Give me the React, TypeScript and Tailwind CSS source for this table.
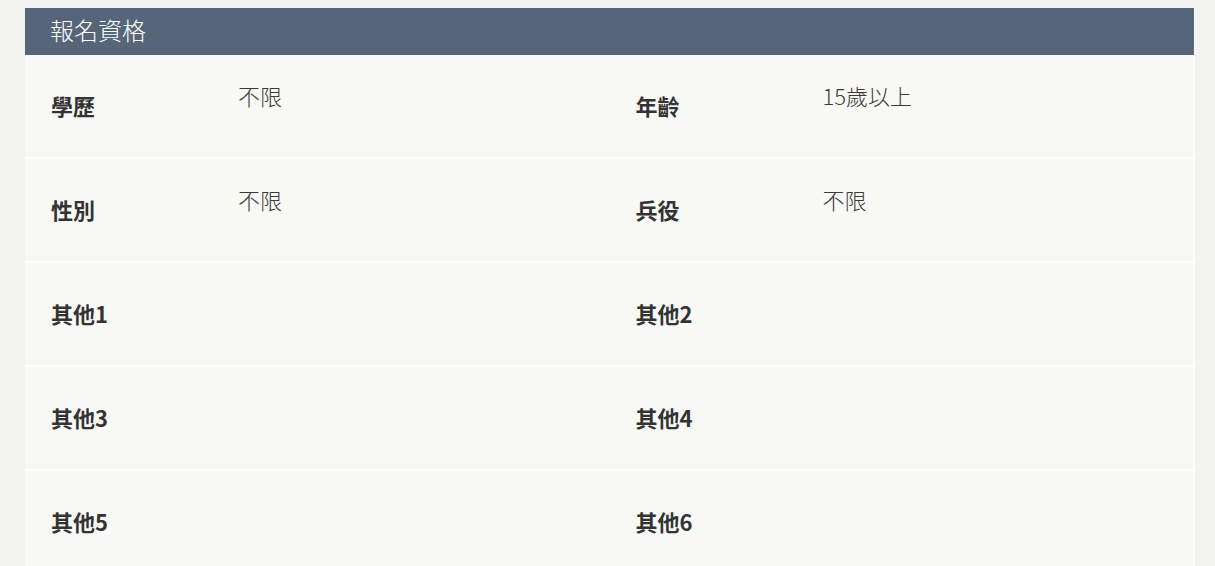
import React from 'react';

type Item = { label: string; value?: string };

const rows: [Item, Item][] = [
  [{ label: '學歷', value: '不限' }, { label: '年齡', value: '15歲以上' }],
  [{ label: '性別', value: '不限' }, { label: '兵役', value: '不限' }],
  [{ label: '其他1' }, { label: '其他2' }],
  [{ label: '其他3' }, { label: '其他4' }],
  [{ label: '其他5' }, { label: '其他6' }],
];

const Cell: React.FC<{ item: Item }> = ({ item }) => (
  <div className="flex h-[102px] pl-[26px]">
    <div className="w-[187px] flex items-center font-semibold text-[22px] text-[#333] leading-[30px] pb-[2px]">
      {item.label}
    </div>
    <div className="flex-1 pt-[25px] font-light text-[22px] text-[#3a3a3a] leading-[30px]">{item.value}</div>
  </div>
);

const App: React.FC = () => {
  return (
    <div
      className="min-h-screen bg-[#f3f3ef] pt-2"
      style={{ fontFamily: '"Noto Sans CJK TC", "Noto Sans", sans-serif' }}
    >
      <div className="ml-[25px] w-[1170px] bg-[#f8f8f5] border-r border-[#fdfdfb]">
        <div className="h-[47px] bg-[#566579] flex items-center pl-[25px] pb-[3px] text-white font-light text-[24px]">
          報名資格
        </div>
        {rows.map((pair, i) => (
          <div key={i} className="grid grid-cols-2 border-b-2 border-white">
            <Cell item={pair[0]} />
            <Cell item={pair[1]} />
          </div>
        ))}
      </div>
    </div>
  );
};

export default App;
